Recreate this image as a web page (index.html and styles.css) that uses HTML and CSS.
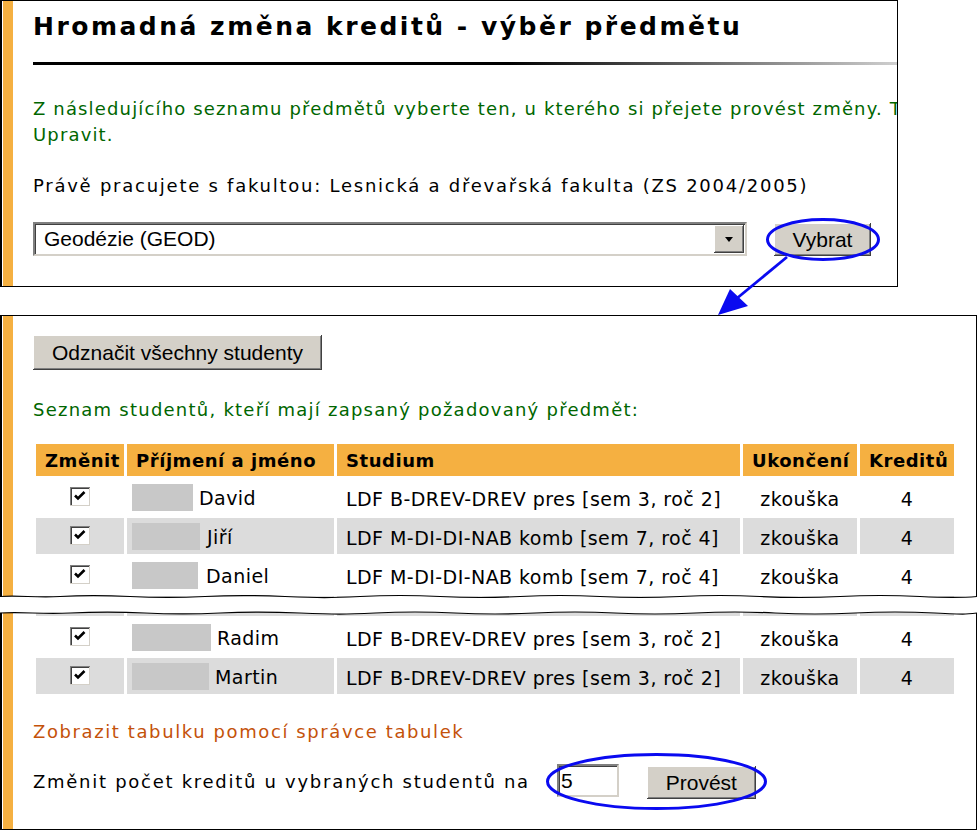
FILE: index.html
```html
<!DOCTYPE html>
<html lang="cs">
<head>
<meta charset="utf-8">
<title>Hromadná změna kreditů</title>
<link rel="stylesheet" href="styles.css">
</head>
<body>
<div class="page">
  <section class="panel p1">
    <div class="inner">
      <h1 class="title">Hromadná změna kreditů - výběr předmětu</h1>
      <div class="rule"></div>
      <p class="green intro">Z následujícího seznamu předmětů vyberte ten, u kterého si přejete provést změny. Tlačítkem<br>Upravit.</p>
      <p class="faculty">Právě pracujete s fakultou: Lesnická a dřevařská fakulta (ZS 2004/2005)</p>
      <div class="pick">
        <div class="select">
          <span class="sel-text">Geodézie (GEOD)</span>
          <span class="sel-btn"><svg width="8" height="5" viewBox="0 0 8 5"><path d="M0 0H8L4 5Z" fill="#000"/></svg></span>
        </div>
        <button class="btn vybrat">Vybrat</button>
      </div>
    </div>
  </section>

  <section class="panel p2">
    <div class="inner">
      <button class="btn unmark">Odznačit všechny studenty</button>
      <p class="green list-title">Seznam studentů, kteří mají zapsaný požadovaný předmět:</p>
      <table class="students">
        <colgroup><col class="c1"><col class="c2"><col class="c3"><col class="c4"><col class="c5"></colgroup>
        <thead>
          <tr><th>Změnit</th><th>Příjmení a jméno</th><th>Studium</th><th>Ukončení</th><th>Kreditů</th></tr>
        </thead>
        <tbody>
          <tr>
            <td class="cb-cell"><svg class="cb" width="20" height="19" viewBox="0 0 20 19"><rect width="20" height="19" fill="#fff"/><path d="M0 0H20V1H1V19H0Z" fill="#808080"/><path d="M1 1H19V2H2V18H1Z" fill="#404040"/><path d="M19 1H20V19H0V18H19Z" fill="#d4d0c8"/><polyline points="5,8.5 8,11.5 14.5,5" fill="none" stroke="#000" stroke-width="2.6"/></svg></td>
            <td class="name"><span class="blur w61"></span>David</td>
            <td>LDF B-DREV-DREV pres [sem 3, roč 2]</td>
            <td class="ctr">zkouška</td>
            <td class="ctr">4</td>
          </tr>
          <tr class="alt">
            <td class="cb-cell"><svg class="cb" width="20" height="19" viewBox="0 0 20 19"><rect width="20" height="19" fill="#fff"/><path d="M0 0H20V1H1V19H0Z" fill="#808080"/><path d="M1 1H19V2H2V18H1Z" fill="#404040"/><path d="M19 1H20V19H0V18H19Z" fill="#d4d0c8"/><polyline points="5,8.5 8,11.5 14.5,5" fill="none" stroke="#000" stroke-width="2.6"/></svg></td>
            <td class="name"><span class="blur w68"></span>Jiří</td>
            <td>LDF M-DI-DI-NAB komb [sem 7, roč 4]</td>
            <td class="ctr">zkouška</td>
            <td class="ctr">4</td>
          </tr>
          <tr>
            <td class="cb-cell"><svg class="cb" width="20" height="19" viewBox="0 0 20 19"><rect width="20" height="19" fill="#fff"/><path d="M0 0H20V1H1V19H0Z" fill="#808080"/><path d="M1 1H19V2H2V18H1Z" fill="#404040"/><path d="M19 1H20V19H0V18H19Z" fill="#d4d0c8"/><polyline points="5,8.5 8,11.5 14.5,5" fill="none" stroke="#000" stroke-width="2.6"/></svg></td>
            <td class="name"><span class="blur w66"></span>Daniel</td>
            <td>LDF M-DI-DI-NAB komb [sem 7, roč 4]</td>
            <td class="ctr">zkouška</td>
            <td class="ctr">4</td>
          </tr>
          <tr class="alt">
            <td class="cb-cell"></td>
            <td class="name"></td>
            <td></td>
            <td class="ctr"></td>
            <td class="ctr"></td>
          </tr>
        </tbody>
      </table>
    </div>
    <svg class="tear tear-bottom" width="977" height="9" viewBox="0 0 977 9" preserveAspectRatio="none">
      <path d="M0 5.5 C 20 4, 35 7, 60 5.5 S 100 4, 130 5.5 S 175 7, 205 5.5 S 250 4, 285 5.5 S 330 7, 360 5.5 S 410 4, 440 5.5 S 490 7, 520 5.5 S 570 4, 600 5.5 S 650 7, 680 5.5 S 730 4, 760 5.5 S 810 7, 840 5.5 S 890 4, 920 5.5 S 960 7, 977 5.5 V9 H0Z" fill="#fff"/>
      <path d="M0 5.5 C 20 4, 35 7, 60 5.5 S 100 4, 130 5.5 S 175 7, 205 5.5 S 250 4, 285 5.5 S 330 7, 360 5.5 S 410 4, 440 5.5 S 490 7, 520 5.5 S 570 4, 600 5.5 S 650 7, 680 5.5 S 730 4, 760 5.5 S 810 7, 840 5.5 S 890 4, 920 5.5 S 960 7, 977 5.5" fill="none" stroke="#000" stroke-width="1.2"/>
    </svg>
  </section>

  <section class="panel p3">
    <div class="inner">
      <table class="students cont">
        <colgroup><col class="c1"><col class="c2"><col class="c3"><col class="c4"><col class="c5"></colgroup>
        <tbody>
          <tr class="alt">
            <td class="cb-cell"></td>
            <td class="name"></td>
            <td></td>
            <td class="ctr"></td>
            <td class="ctr"></td>
          </tr>
          <tr>
            <td class="cb-cell"><svg class="cb" width="20" height="19" viewBox="0 0 20 19"><rect width="20" height="19" fill="#fff"/><path d="M0 0H20V1H1V19H0Z" fill="#808080"/><path d="M1 1H19V2H2V18H1Z" fill="#404040"/><path d="M19 1H20V19H0V18H19Z" fill="#d4d0c8"/><polyline points="5,8.5 8,11.5 14.5,5" fill="none" stroke="#000" stroke-width="2.6"/></svg></td>
            <td class="name"><span class="blur w79"></span>Radim</td>
            <td>LDF B-DREV-DREV pres [sem 3, roč 2]</td>
            <td class="ctr">zkouška</td>
            <td class="ctr">4</td>
          </tr>
          <tr class="alt">
            <td class="cb-cell"><svg class="cb" width="20" height="19" viewBox="0 0 20 19"><rect width="20" height="19" fill="#fff"/><path d="M0 0H20V1H1V19H0Z" fill="#808080"/><path d="M1 1H19V2H2V18H1Z" fill="#404040"/><path d="M19 1H20V19H0V18H19Z" fill="#d4d0c8"/><polyline points="5,8.5 8,11.5 14.5,5" fill="none" stroke="#000" stroke-width="2.6"/></svg></td>
            <td class="name"><span class="blur w77"></span>Martin</td>
            <td>LDF B-DREV-DREV pres [sem 3, roč 2]</td>
            <td class="ctr">zkouška</td>
            <td class="ctr">4</td>
          </tr>
        </tbody>
      </table>
      <a class="link" href="#">Zobrazit tabulku pomocí správce tabulek</a>
      <div class="change">
        <span class="change-label">Změnit počet kreditů u vybraných studentů na</span>
        <input class="num" type="text" value="5">
        <button class="btn provest">Provést</button>
      </div>
    </div>
    <svg class="tear tear-top" width="977" height="9" viewBox="0 0 977 9" preserveAspectRatio="none">
      <path d="M0 4 C 25 2.5, 40 5.5, 70 4 S 115 2.5, 145 4 S 190 5.5, 220 4 S 265 2.5, 300 4 S 345 5.5, 375 4 S 425 2.5, 455 4 S 505 5.5, 535 4 S 585 2.5, 615 4 S 665 5.5, 695 4 S 745 2.5, 775 4 S 825 5.5, 855 4 S 905 2.5, 935 4 S 965 5.5, 977 4 V0 H0Z" fill="#fff"/>
      <path d="M0 4 C 25 2.5, 40 5.5, 70 4 S 115 2.5, 145 4 S 190 5.5, 220 4 S 265 2.5, 300 4 S 345 5.5, 375 4 S 425 2.5, 455 4 S 505 5.5, 535 4 S 585 2.5, 615 4 S 665 5.5, 695 4 S 745 2.5, 775 4 S 825 5.5, 855 4 S 905 2.5, 935 4 S 965 5.5, 977 4" fill="none" stroke="#000" stroke-width="1.2"/>
    </svg>
  </section>

  <svg class="annot" width="979" height="830" viewBox="0 0 979 830">
    <ellipse cx="823" cy="239.5" rx="55.5" ry="20" fill="none" stroke="#0a0af0" stroke-width="3"/>
    <line x1="787" y1="257" x2="730" y2="304" stroke="#0a0af0" stroke-width="2.8"/>
    <path d="M718 315 L730 289 L748 306 Z" fill="#0a0af0"/>
    <ellipse cx="656.5" cy="781.5" rx="109" ry="27" fill="none" stroke="#0a0af0" stroke-width="3"/>
  </svg>
</div>
</body>
</html>
```

FILE: styles.css
```css
* { box-sizing: border-box; }

body {
  margin: 0;
  background: #fff;
  font-family: "DejaVu Sans", Verdana, sans-serif;
  color: #000;
}

.page {
  position: relative;
  width: 979px;
  height: 830px;
  overflow: hidden;
}

.panel {
  position: relative;
  border: 1px solid #000;
  border-left-width: 2px;
  padding-left: 1px;
  background: #fff;
}

.inner {
  height: 100%;
  border-left: 10px solid #f5b041;
  padding-left: 20px;
  overflow: hidden;
}

/* ---------- panel 1 ---------- */
.p1 {
  width: 898px;
  height: 287px;
}

.p1 .inner { padding-top: 12px; }

.title {
  margin: 0;
  font-family: "DejaVu Sans", Verdana, sans-serif;
  font-weight: bold;
  font-size: 25px;
  line-height: 28px;
  letter-spacing: 2.5px;
  white-space: nowrap;
}

.rule {
  margin-top: 21px;
  margin-right: -2px;
  height: 3px;
  background: linear-gradient(to right, #000 0%, #000 55%, #d0d0d0 100%);
}

.green { color: #006600; }

p { margin: 0; }

.intro {
  margin-top: 31px;
  font-size: 18px;
  line-height: 26px;
  letter-spacing: 1.15px;
  white-space: nowrap;
}

.faculty {
  margin-top: 27px;
  font-size: 18px;
  line-height: 21px;
  letter-spacing: 1.75px;
  white-space: nowrap;
}

.pick {
  margin-top: 26px;
  display: flex;
  align-items: center;
  gap: 27px;
}

.select {
  width: 714px;
  height: 34px;
  display: flex;
  align-items: center;
  justify-content: space-between;
  border: 2px solid;
  border-color: #808080 #d4d0c8 #d4d0c8 #808080;
  box-shadow: inset 1px 1px 0 #404040;
  padding: 1px 1px 1px 9px;
  font-family: "Liberation Sans", Arial, sans-serif;
  font-size: 21px;
}

.sel-btn {
  width: 30px;
  height: 28px;
  display: flex;
  align-items: center;
  justify-content: center;
  background: #d4d0c8;
  box-shadow: inset -1px -1px 0 #404040, inset 1px 1px 0 #fff, inset -2px -2px 0 #808080;
}

.btn {
  font-family: "Liberation Sans", Arial, sans-serif;
  font-size: 21px;
  color: #000;
  background: #d4d0c8;
  border: 0;
  padding: 0;
  box-shadow: inset -1px -1px 0 #404040, inset 1px 1px 0 #fff, inset -2px -2px 0 #808080;
}

.vybrat {
  width: 97px;
  height: 33px;
  margin-top: 1px;
}

/* ---------- panel 2 ---------- */
.p2 {
  margin-top: 28px;
  width: 977px;
  height: 284px;
  border-bottom: 0;
}

.p2 .inner { padding-top: 19px; }

.unmark {
  display: block;
  width: 289px;
  height: 35px;
}

.list-title {
  margin-top: 29px;
  font-size: 18px;
  line-height: 21px;
  letter-spacing: 1.24px;
  white-space: nowrap;
}

.students {
  margin-top: 21px;
  border-collapse: separate;
  border-spacing: 3px;
  table-layout: fixed;
  width: 924px;
  font-size: 19px;
  letter-spacing: 0.45px;
}

.c1 { width: 88px; }
.c2 { width: 207px; }
.c3 { width: 403px; }
.c4 { width: 114px; }
.c5 { width: 94px; }

.students th {
  background: #f5b041;
  height: 32px;
  padding: 0 0 0 9px;
  text-align: left;
  font-weight: bold;
  font-size: 18px;
  letter-spacing: 0.55px;
  white-space: nowrap;
}

.students td {
  height: 36px;
  padding: 4px 0 0 9px;
  white-space: nowrap;
  vertical-align: middle;
}

.students tr.alt td { background: #dcdcdc; }

.students td.ctr { text-align: center; padding: 4px 0 0; }

.students td.cb-cell { text-align: center; padding: 0; }

.cb { display: inline-block; vertical-align: middle; margin-top: -4px; }

.students td.name { padding-left: 5px; }

.blur {
  display: inline-block;
  height: 27px;
  background: #c8c8c8;
  vertical-align: middle;
  margin: -4px 6px 0 0;
}

.w61 { width: 61px; }
.w66 { width: 66px; margin-right: 8px; }
.w68 { width: 68px; margin-right: 7px; }
.w77 { width: 77px; }
.w79 { width: 79px; }

.tear {
  position: absolute;
  left: -2px;
}

.tear-bottom { bottom: -1px; }

/* ---------- panel 3 ---------- */
.p3 {
  margin-top: 10px;
  width: 977px;
  height: 221px;
  border-top: 0;
}

.tear-top { top: 0; }

.cont { margin-top: -32px; }

.link {
  display: block;
  margin-top: 24px;
  color: #c4520a;
  text-decoration: none;
  font-size: 18px;
  line-height: 21px;
  letter-spacing: 1.6px;
  white-space: nowrap;
}

.change {
  margin-top: 22px;
  display: flex;
  align-items: center;
  height: 35px;
  font-size: 18px;
  white-space: nowrap;
}

.change-label {
  margin-right: 27px;
  letter-spacing: 1.72px;
}

.num {
  width: 62px;
  height: 33px;
  margin: 0 28px 2px 0;
  border: 2px solid;
  border-color: #808080 #d4d0c8 #d4d0c8 #808080;
  box-shadow: inset 1px 1px 0 #404040;
  padding: 0 0 0 2px;
  font-family: "Liberation Sans", Arial, sans-serif;
  font-size: 21px;
  outline: none;
}

.provest {
  width: 109px;
  height: 33px;
  margin-top: 2px;
}

.annot {
  position: absolute;
  left: 0;
  top: 0;
  pointer-events: none;
}
```
